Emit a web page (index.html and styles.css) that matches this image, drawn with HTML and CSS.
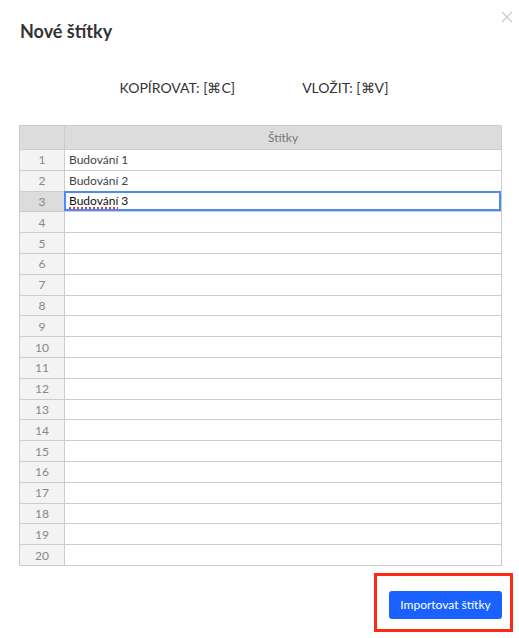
FILE: index.html
```html
<!DOCTYPE html>
<html lang="cs">
<head>
<meta charset="utf-8">
<title>Nové štítky</title>
<link rel="stylesheet" href="styles.css">
</head>
<body>
<div class="modal">
  <button class="close" aria-label="Zavřít">
    <svg width="12" height="12" viewBox="0 0 12 12"><path d="M1 1L11 11M11 1L1 11" stroke="#c8c8c8" stroke-width="1.2" fill="none"/></svg>
  </button>
  <h1 class="title">Nové štítky</h1>
  <div class="shortcuts">
    <span>KOPÍROVAT: [⌘C]</span>
    <span>VLOŽIT: [⌘V]</span>
  </div>
  <div class="grid">
    <div class="corner"></div>
    <div class="colhead">Štítky</div>
    <div class="rowhead">1</div><div class="cell">Budování 1</div>
    <div class="rowhead">2</div><div class="cell">Budování 2</div>
    <div class="rowhead active">3</div><div class="cell selected"><span><span class="misspelled">Budování</span> 3</span></div>
    <div class="rowhead">4</div><div class="cell"></div>
    <div class="rowhead">5</div><div class="cell"></div>
    <div class="rowhead">6</div><div class="cell"></div>
    <div class="rowhead">7</div><div class="cell"></div>
    <div class="rowhead">8</div><div class="cell"></div>
    <div class="rowhead">9</div><div class="cell"></div>
    <div class="rowhead">10</div><div class="cell"></div>
    <div class="rowhead">11</div><div class="cell"></div>
    <div class="rowhead">12</div><div class="cell"></div>
    <div class="rowhead">13</div><div class="cell"></div>
    <div class="rowhead">14</div><div class="cell"></div>
    <div class="rowhead">15</div><div class="cell"></div>
    <div class="rowhead">16</div><div class="cell"></div>
    <div class="rowhead">17</div><div class="cell"></div>
    <div class="rowhead">18</div><div class="cell"></div>
    <div class="rowhead">19</div><div class="cell"></div>
    <div class="rowhead">20</div><div class="cell"></div>
  </div>
  <div class="footer">
    <div class="highlight">
      <button class="primary">Importovat štítky</button>
    </div>
  </div>
</div>
</body>
</html>
```
FILE: styles.css
```css
html, body {
  margin: 0;
  padding: 0;
  background: #fff;
}
body {
  font-family: Lato, "Noto Sans", sans-serif;
  color: #333;
}
.modal {
  position: relative;
  width: 519px;
  height: 638px;
  box-sizing: border-box;
  padding: 18px 0 0 0;
}
.close {
  position: absolute;
  top: 10px;
  right: 5px;
  width: 14px;
  height: 14px;
  padding: 0;
  border: 0;
  background: none;
  display: flex;
  align-items: center;
  justify-content: center;
}
.title {
  margin: 0 0 0 20px;
  font-size: 18px;
  line-height: 26px;
  font-weight: 700;
  color: #333;
}
.shortcuts {
  display: flex;
  justify-content: center;
  gap: 67px;
  margin-top: 34px;
  padding-right: 11px;
  font-size: 14px;
  line-height: 20px;
  color: #333;
}
.grid {
  display: grid;
  grid-template-columns: 45px 437px;
  grid-template-rows: 24px repeat(20, 20.8px);
  margin: 27px 0 0 19px;
  width: 482px;
  border-top: 1px solid #ccc;
  border-left: 1px solid #ccc;
  box-sizing: border-box;
  font-size: 12px;
}
.grid > div {
  border-right: 1px solid #ccc;
  border-bottom: 1px solid #ccc;
  box-sizing: border-box;
  display: flex;
  align-items: center;
  overflow: hidden;
  white-space: nowrap;
}
.corner, .colhead {
  background: #dcdcdc;
}
.colhead {
  justify-content: center;
  color: #777;
}
.rowhead {
  background: #f3f3f3;
  justify-content: center;
  color: #888;
}
.rowhead.active {
  background: #dcdcdc;
}
.cell {
  padding-left: 4px;
  color: #444;
}
.cell.selected {
  box-shadow: inset 0 0 0 2px #4b89ff;
  color: #111;
  margin-top: -1px;
  height: calc(100% + 1px);
  margin-left: -1px;
  padding-left: 5px;
  width: calc(100% + 1px);
}
.misspelled {
  text-decoration: underline dotted #e53935;
  text-decoration-thickness: 2px;
  text-underline-offset: 2px;
}
.footer {
  display: flex;
  justify-content: flex-end;
  margin-top: 7px;
  padding-right: 6px;
}
.highlight {
  border: 3px solid #ff2a12;
  padding: 15px 8px 10px 12px;
}
.primary {
  display: block;
  width: 113px;
  height: 28px;
  border: 0;
  border-radius: 3px;
  background: #1a62ff;
  color: #fff;
  font-family: Lato, "Noto Sans", sans-serif;
  font-size: 12px;
  padding: 0;
}
```
